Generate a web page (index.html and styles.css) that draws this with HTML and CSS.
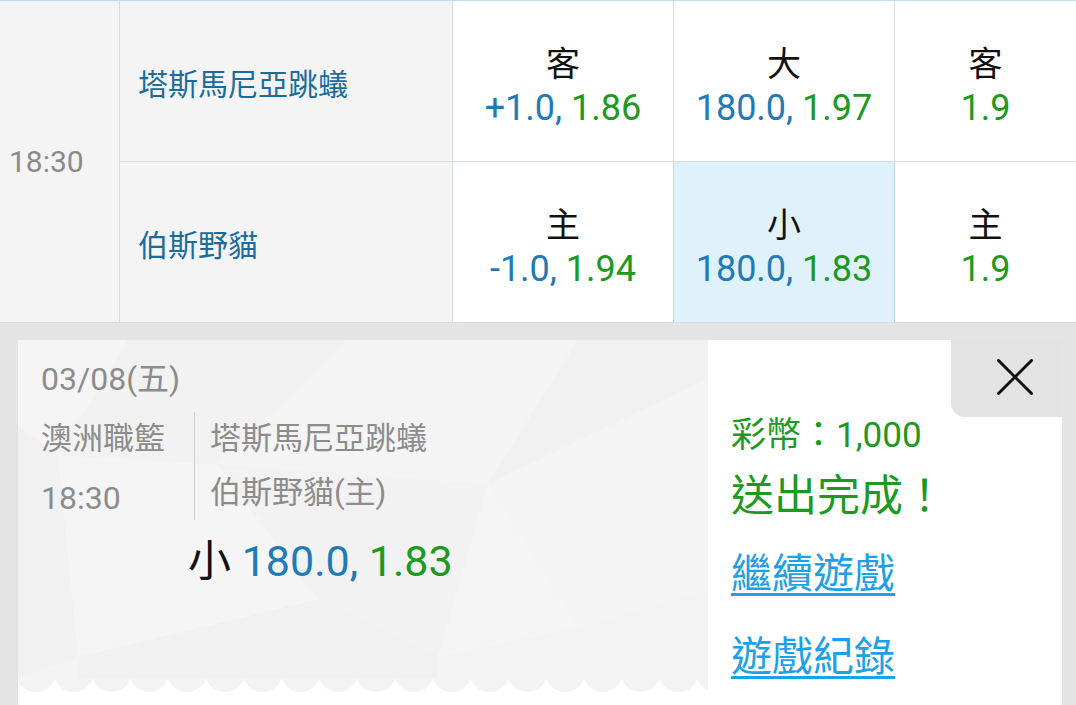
FILE: index.html
```html
<!DOCTYPE html>
<html lang="zh-Hant">
<head>
<meta charset="utf-8">
<title>投注完成</title>
<link rel="stylesheet" href="styles.css">
</head>
<body>
<div class="page">
  <div class="odds-table">
    <div class="cell time">18:30</div>
    <div class="cell team row1">塔斯馬尼亞跳蟻</div>
    <div class="cell odd row1"><span class="lbl">客</span><span class="num"><span class="blue">+1.0, </span><span class="green">1.86</span></span></div>
    <div class="cell odd row1"><span class="lbl">大</span><span class="num"><span class="blue">180.0, </span><span class="green">1.97</span></span></div>
    <div class="cell odd last row1"><span class="lbl">客</span><span class="num"><span class="green">1.9</span></span></div>
    <div class="cell team row2">伯斯野貓</div>
    <div class="cell odd row2"><span class="lbl">主</span><span class="num"><span class="blue">-1.0, </span><span class="green">1.94</span></span></div>
    <div class="cell odd row2 selected"><span class="lbl">小</span><span class="num"><span class="blue">180.0, </span><span class="green">1.83</span></span></div>
    <div class="cell odd last row2"><span class="lbl">主</span><span class="num"><span class="green">1.9</span></span></div>
  </div>

  <div class="panel">
    <div class="ticket-col">
      <div class="ticket">
        <svg class="ticket-bg" viewBox="0 0 690 352" preserveAspectRatio="none" aria-hidden="true">
          <polygon points="0,0 110,0 40,120 0,90" fill="#f5f5f5"/>
          <polygon points="110,0 330,0 200,130 40,120" fill="#f2f2f2"/>
          <polygon points="330,0 560,0 470,150 200,130" fill="#f4f4f4"/>
          <polygon points="560,0 690,0 690,40 470,150" fill="#f1f1f1"/>
          <polygon points="690,40 690,260 560,300 470,150" fill="#f4f4f4"/>
          <polygon points="0,90 40,120 60,330 0,352" fill="#f1f1f1"/>
          <polygon points="40,120 200,130 300,270 60,330" fill="#f5f5f5"/>
          <polygon points="200,130 470,150 420,330 300,270" fill="#f2f2f2"/>
          <polygon points="470,150 560,300 420,330" fill="#f5f5f5"/>
          <polygon points="60,330 300,270 420,330 420,352 60,352" fill="#f1f1f1"/>
          <polygon points="420,330 560,300 690,260 690,352 420,352" fill="#f3f3f3"/>
        </svg>
        <div class="ticket-body">
          <div class="date">03/08(五)</div>
          <div class="match">
            <div class="match-left">
              <div class="line">澳洲職籃</div>
              <div class="line">18:30</div>
            </div>
            <div class="match-right">
              <div class="line">塔斯馬尼亞跳蟻</div>
              <div class="line">伯斯野貓(主)</div>
            </div>
          </div>
          <div class="bet"><span class="bet-lbl">小</span> <span class="blue">180.0, </span><span class="green">1.83</span></div>
        </div>
      </div>
      <div class="zigzag"></div>
    </div>

    <div class="result">
      <div class="close-row">
        <button class="close" type="button" aria-label="關閉">
          <svg viewBox="0 0 36 36" width="36" height="36" aria-hidden="true">
            <path d="M1.5 1.5 L34.5 34.5 M34.5 1.5 L1.5 34.5" stroke="#111" stroke-width="3" stroke-linecap="round" fill="none"/>
          </svg>
        </button>
      </div>
      <div class="coins">彩幣：1,000</div>
      <div class="done">送出完成！</div>
      <a class="link link-first" href="#">繼續遊戲</a>
      <a class="link link-second" href="#">遊戲紀錄</a>
    </div>
  </div>
</div>
</body>
</html>
```

FILE: styles.css
```css
* { box-sizing: border-box; }

html, body {
  margin: 0;
  padding: 0;
}

body {
  width: 1076px;
  height: 705px;
  overflow: hidden;
  background: #e4e4e4;
  font-family: Roboto, "Noto Sans CJK TC", sans-serif;
}

.page {
  width: 1076px;
}

/* ---------- odds table ---------- */
.odds-table {
  display: grid;
  grid-template-columns: 120px 333px 221px 221px 1fr;
  grid-template-rows: 161px 161px;
  border-top: 1px solid #c6dbe8;
  background: #fff;
}

.cell {
  border-right: 1px solid #d6dee5;
  border-bottom: 1px solid #d6dee5;
}

.cell.last { border-right: none; }

.time {
  grid-row: 1 / span 2;
  display: flex;
  align-items: center;
  padding-left: 9px;
  background: #f4f4f4;
  color: #8a8a8a;
  font-size: 30px;
}

.team {
  display: flex;
  align-items: center;
  padding-left: 18px;
  padding-top: 2px;
  background: #f4f4f4;
  color: #1b6c9d;
  font-size: 30px;
}

.odd {
  display: flex;
  flex-direction: column;
  align-items: center;
  justify-content: center;
  padding-top: 10px;
  background: #fff;
}

.odd.selected {
  background: #dff2fb;
  border-right-color: #bcd6e6;
  border-left: 1px solid #bcd6e6;
  margin-left: -1px;
}

.lbl {
  font-size: 34px;
  line-height: 40px;
  color: #111;
}

.num {
  font-size: 36px;
  line-height: 42px;
  margin-top: 3px;
}

.blue { color: #1f7bb8; }
.green { color: #1c9a1f; }

/* ---------- panel ---------- */
.panel {
  display: flex;
  margin: 17px 14px 0 18px;
  height: 380px;
  background: #fff;
}

.ticket-col {
  width: 690px;
  display: flex;
  flex-direction: column;
}

.ticket {
  position: relative;
  height: 338px;
  background: #f3f3f3;
}

.ticket-bg {
  position: absolute;
  inset: 0;
  width: 100%;
  height: 100%;
}

.ticket-body {
  position: relative;
  padding: 19px 0 0 23px;
  color: #8c8c8c;
  font-size: 31px;
}

.date {
  font-size: 32px;
  line-height: 40px;
}

.match {
  display: flex;
  margin-top: 13px;
}

.match-left {
  width: 153px;
}

.match-right {
  border-left: 1px solid #cfcfcf;
  padding-left: 15px;
}

.line {
  height: 54px;
  line-height: 54px;
}

.match-left .line:last-child {
  font-size: 32px;
  line-height: 64px;
}

.bet {
  margin: 16px 0 0 147px;
  font-size: 43px;
  line-height: 50px;
}

.bet-lbl { color: #111; }

.zigzag {
  height: 14px;
  background-color: #fff;
  background-image: radial-gradient(circle at 50% -6px, #f3f3f3 19.5px, #fff 20.5px);
  background-size: 37.8px 14px;
  background-position: -1px 0;
  background-repeat: repeat-x;
}

/* ---------- result ---------- */
.result {
  flex: 1;
  display: flex;
  flex-direction: column;
  align-items: flex-start;
  padding-left: 23px;
  background: #fff;
}

.close-row {
  align-self: stretch;
  display: flex;
  justify-content: flex-end;
  height: 76px;
}

.close {
  width: 111px;
  height: 77px;
  border: none;
  padding: 0 0 4px 17px;
  background: #e3e3e3;
  border-bottom-left-radius: 14px;
  display: flex;
  align-items: center;
  justify-content: center;
}

.coins {
  color: #1c9a1f;
  font-size: 35px;
  line-height: 40px;
}

.done {
  color: #1c9a1f;
  font-size: 43px;
  line-height: 50px;
  margin-top: 15px;
}

.link {
  color: #1da1e6;
  font-size: 41px;
  line-height: 50px;
  text-decoration: underline;
  text-decoration-thickness: 3px;
  text-underline-offset: 5px;
}

.link-first { margin-top: 28px; }
.link-second { margin-top: 33px; }
```
